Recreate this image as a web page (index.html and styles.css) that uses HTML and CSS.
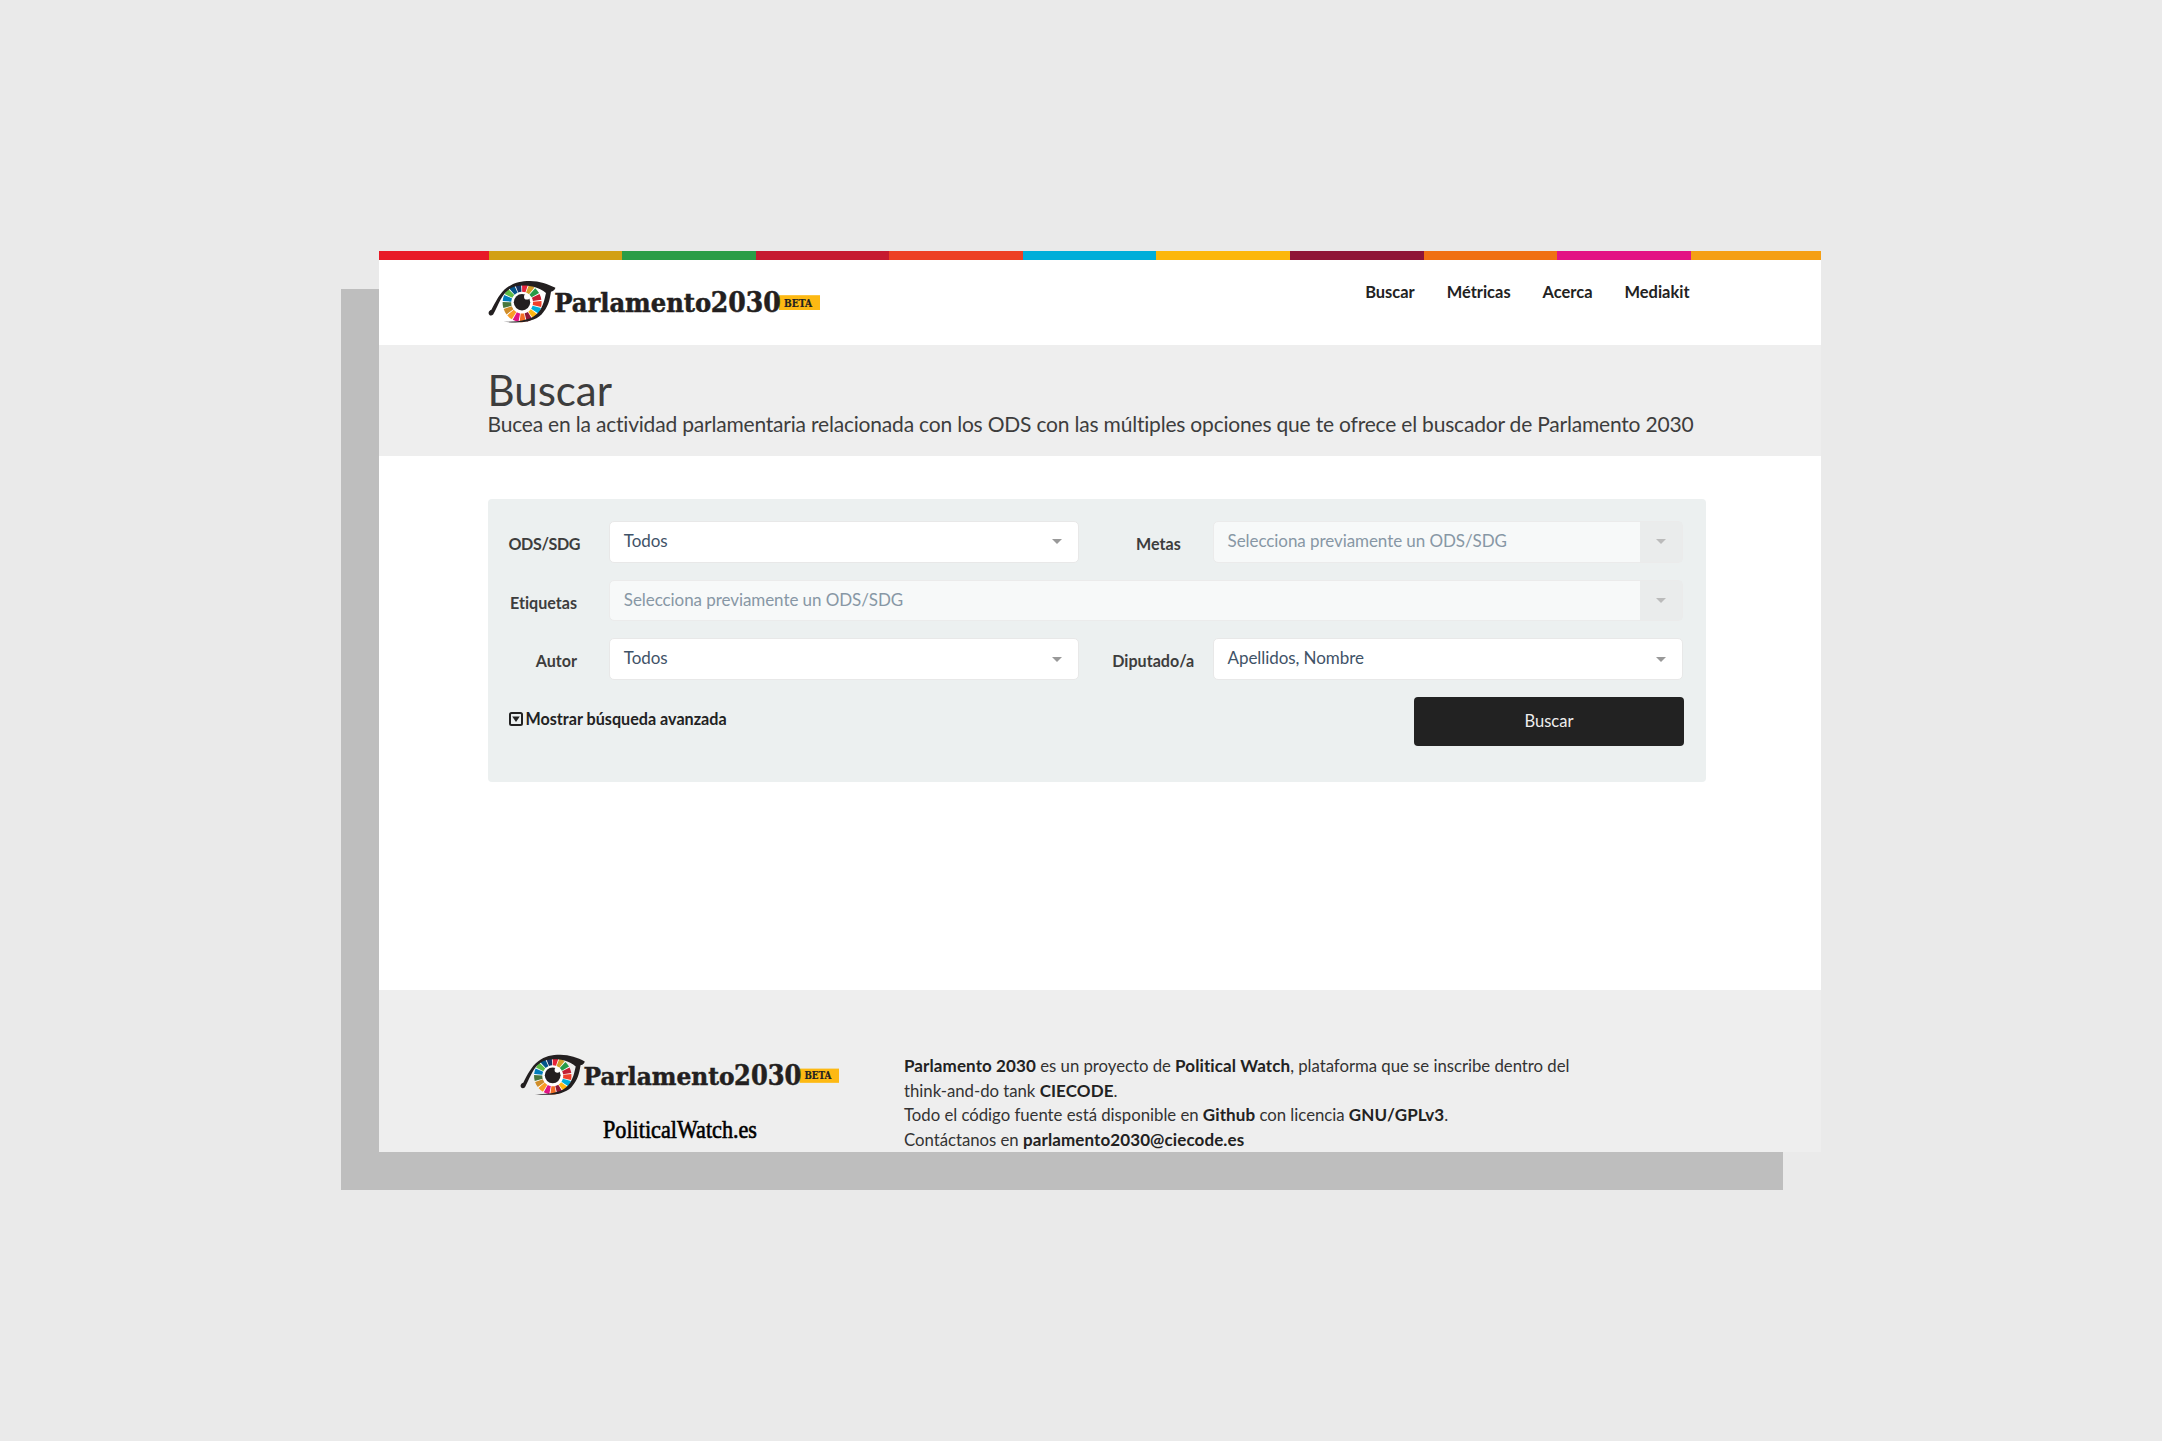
FILE: index.html
```html
<!DOCTYPE html>
<html lang="es">
<head>
<meta charset="utf-8">
<title>Parlamento 2030 - Buscar</title>
<link rel="stylesheet" href="styles.css">
</head>
<body>
<div class="window">
  <div class="stripes"><i></i><i></i><i></i><i></i><i></i><i></i><i></i><i></i><i></i><i></i><i></i></div>
  <header class="header">
    <svg class="logo" viewBox="0 0 332 44">
      <g id="logo">
        <circle cx="34.100" cy="22.700" r="19.600" fill="#fff"/>
        <g id="segments" fill="none" stroke-width="8.600"></g>
        <circle cx="34" cy="22.200" r="8.200" fill="#231f20"/>
        <circle cx="38.900" cy="16.700" r="2.900" fill="#fff"/>
        <path fill="#231f20" d="M5.200 34.600C2.800 36.800 .4 35 .6 32.700C.8 30.800 2.500 30.200 3.400 29.800C7.500 22 12 12.500 19 7.500C26 2.500 33 .9 42 .9C51.500 1 60 4 67.400 7.800C67 9.500 66 11 63 11.800C61.500 21 60 27.500 53.500 34.500C45.500 42 33 43.600 15.500 41.800C32 42 43.500 40 50 32.800C55.500 26.500 56.500 19 58 13C49 5.500 37 4.700 28 6.200C14.500 9.500 12 22 5.200 34.600Z"/>
        <rect x="291" y="15.200" width="41" height="14.800" fill="#fdb913"/>
        <text class="wordmark" x="66.200" y="32.400" font-size="26" textLength="157" lengthAdjust="spacingAndGlyphs">Parlamento</text>
        <text class="wordmark" x="222.800" y="32.400" font-size="28.500" textLength="70" lengthAdjust="spacingAndGlyphs">2030</text>
        <text class="wordmark beta" x="296" y="26.500" font-size="11.500" textLength="28" lengthAdjust="spacingAndGlyphs">BETA</text>
      </g>
    </svg>
    <nav class="nav"><a>Buscar</a><a>Métricas</a><a>Acerca</a><a>Mediakit</a></nav>
  </header>
  <section class="intro">
    <h1>Buscar</h1>
    <p>Bucea en la actividad parlamentaria relacionada con los ODS con las múltiples opciones que te ofrece el buscador de Parlamento 2030</p>
  </section>
  <main class="main">
    <form class="search">
      <div class="row">
        <label class="caps">ODS/SDG</label><div class="select">Todos<b class="arrow"></b></div>
        <label class="second">Metas</label><div class="select disabled">Selecciona previamente un ODS/SDG<b class="arrow"></b></div>
      </div>
      <div class="row">
        <label>Etiquetas</label><div class="select disabled">Selecciona previamente un ODS/SDG<b class="arrow"></b></div>
      </div>
      <div class="row">
        <label>Autor</label><div class="select">Todos<b class="arrow"></b></div>
        <label class="second">Diputado/a</label><div class="select">Apellidos, Nombre<b class="arrow"></b></div>
      </div>
      <div class="actions">
        <a class="advanced"><svg width="14" height="14" viewBox="0 0 14 14"><rect x="1" y="1" width="12" height="12" rx="1.500" fill="none" stroke="#222" stroke-width="2"/><path d="M3.200 4.400h7.600L7 10z" fill="#222"/></svg>Mostrar búsqueda avanzada</a>
        <button type="button">Buscar</button>
      </div>
    </form>
  </main>
  <footer class="footer">
    <div class="brands">
      <svg class="logo" viewBox="0 0 332 44"><use href="#logo"/></svg>
      <svg class="watch" viewBox="0 0 156 32"><text x="1" y="24" textLength="154" lengthAdjust="spacingAndGlyphs">PoliticalWatch.es</text></svg>
    </div>
    <p><b>Parlamento 2030</b> es un proyecto de <b>Political Watch</b>, plataforma que se inscribe dentro del<br>think-and-do tank <b>CIECODE</b>.<br>Todo el código fuente está disponible en <b>Github</b> con licencia <b>GNU/GPLv3</b>.<br>Contáctanos en <b>parlamento2030@ciecode.es</b></p>
  </footer>
</div>
<script src="logo.js"></script>
</body>
</html>
```
FILE: logo.js
```js
// One iris segment per Sustainable Development Goal, clockwise from the top.
const goals = ['#e5243b', '#d3a029', '#279b48', '#c31f33', '#ef402b', '#00aed9', '#fdb713', '#8f1838', '#f36d25', '#e11484', '#f99d26', '#cf8d2a', '#48773e', '#007dbc', '#5dbb46', '#02558b', '#183668'];
const group = document.getElementById('segments');
goals.forEach((color, i) => {
  const c = document.createElementNS('http://www.w3.org/2000/svg', 'circle');
  const attrs = { cx: 34.1, cy: 22.7, r: 15.2, pathLength: 170, 'stroke-dasharray': '8.6 161.4', stroke: color, transform: `rotate(${i * 360 / 17 - 90} 34.1 22.7)` };
  for (const k in attrs) c.setAttribute(k, attrs[k]);
  group.appendChild(c);
});
```
FILE: styles.css
```css
* { box-sizing: border-box; }
body { margin: 0; background: #eaeaea; font-family: Lato, sans-serif; font-variant-ligatures: none; color: #3d3d3d; height: 1441px; overflow: hidden; padding: 251px 0 0 379px; }
h1, p { margin: 0; font-weight: 400; }
.window { width: 1442px; height: 901px; background: #fff; box-shadow: -38px 38px 0 #bebebe; display: flex; flex-direction: column; overflow: hidden; }
.stripes { height: 9px; flex: none; display: grid; grid-template-columns: 109.700px repeat(9, 133.560px) 1fr; }
.stripes i:nth-child(1) { background: #e81a27; }
.stripes i:nth-child(2) { background: #d2a014; }
.stripes i:nth-child(3) { background: #2a9d47; }
.stripes i:nth-child(4) { background: #c61a30; }
.stripes i:nth-child(5) { background: #ed4023; }
.stripes i:nth-child(6) { background: #00aed9; }
.stripes i:nth-child(7) { background: #fcb70a; }
.stripes i:nth-child(8) { background: #8f1536; }
.stripes i:nth-child(9) { background: #f07013; }
.stripes i:nth-child(10) { background: #e31284; }
.stripes i:nth-child(11) { background: #f59f14; }
.header { height: 85px; flex: none; display: flex; justify-content: space-between; padding: 20px 131.500px 0 109px; }
.logo { width: 332px; height: 44px; display: block; }
.wordmark { font-family: "DejaVu Serif Condensed", "DejaVu Serif", serif; font-weight: 700; fill: #231f20; stroke: #231f20; stroke-width: .5px; }
.beta { stroke-width: .2px; }
.nav { display: flex; gap: 32px; font-size: 16.450px; line-height: 24px; font-weight: 700; color: #222; }
.intro { height: 111px; flex: none; background: #eee; padding: 20px 0 0 108.500px; white-space: nowrap; }
.intro h1 { font-size: 42px; line-height: 50px; }
.intro p { font-size: 21px; line-height: 26px; margin-top: -4px; letter-spacing: -.197px; }
.main { height: 534px; flex: none; padding: 43px 115.500px 0 108.500px; }
.search { height: 283px; background: #ecf0f0; border-radius: 4px; padding: 22px 22.500px 0 21px; }
.row { display: flex; height: 41.500px; margin-bottom: 17.200px; }
.row label { width: 68.500px; margin-right: 32px; text-align: right; white-space: nowrap; font-size: 16.100px; font-weight: 700; line-height: 45px; flex: none; }
.row .caps { letter-spacing: -.38px; }
.row .second { margin-left: 33px; }
.select { flex: 1; background: #fff; border: 1px solid #e8e8e8; border-radius: 5px; padding-left: 13.800px; font-size: 17px; line-height: 37.500px; letter-spacing: -.07px; color: #3f5368; display: flex; justify-content: space-between; white-space: nowrap; }
.arrow { width: 42px; display: grid; place-items: center; }
.arrow::before { content: ""; border: 5px solid transparent; border-top: 5.500px solid #999; border-bottom: 0; }
.disabled { background: #f7f9f9; color: #8797a5; border-color: #ebebeb; }
.disabled .arrow { background: #eaecec; }
.disabled .arrow::before { border-top-color: #bbb; }
.actions { display: flex; justify-content: space-between; align-items: flex-start; }
.advanced { font-size: 16.150px; line-height: 24px; font-weight: 700; color: #222; display: flex; align-items: center; gap: 3px; padding-top: 10px; }
.search button { width: 270px; height: 48.500px; margin: 0 -1px 0 0; border: 0; border-radius: 4px; background: #222; color: #eee; font: 16.500px Lato, sans-serif; }
.footer { flex: 1; background: #eee; display: flex; padding: 64px 0 0 141px; }
.brands { width: 319px; margin-right: 65px; display: flex; flex-direction: column; align-items: center; }
.footer .logo { width: 319px; height: 42.300px; }
.watch { width: 156px; height: 32px; flex: none; margin-top: 18px; font: 24.500px "Liberation Serif", serif; fill: #000; stroke: #000; stroke-width: .6px; }
.footer p { font-size: 16.750px; line-height: 24.400px; letter-spacing: -.02px; color: #333; white-space: nowrap; padding-top: .4px; }
.footer b { color: #222; font-size: 17px; letter-spacing: .1px; line-height: 1; }
```
